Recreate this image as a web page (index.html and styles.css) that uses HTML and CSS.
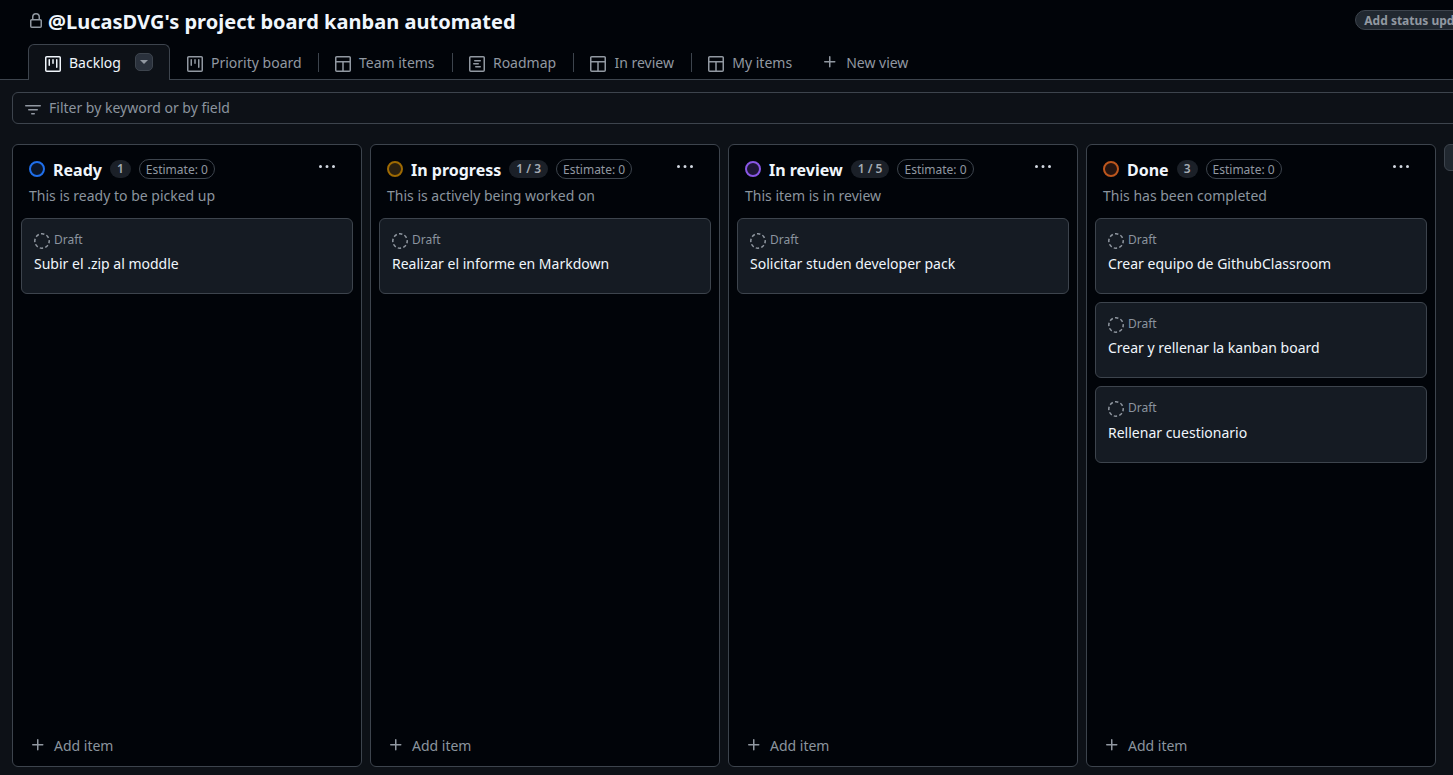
FILE: index.html
```html
<!DOCTYPE html>
<html lang="en">
<head>
<meta charset="utf-8">
<title>Project board</title>
<link rel="stylesheet" href="styles.css">
</head>
<body>
<svg class="sprites" width="0" height="0" aria-hidden="true">
  <symbol id="i-board" viewBox="0 0 16 16"><path fill="currentColor" d="M0 1.75C0 .784.784 0 1.75 0h12.5C15.216 0 16 .784 16 1.75v12.5A1.75 1.75 0 0 1 14.25 16H1.75A1.75 1.75 0 0 1 0 14.25ZM1.5 1.75v12.5c0 .138.112.25.25.25h12.5a.25.25 0 0 0 .25-.25V1.75a.25.25 0 0 0-.25-.25H1.75a.25.25 0 0 0-.25.25ZM11.75 3a.75.75 0 0 1 .75.75v7.5a.75.75 0 0 1-1.5 0v-7.5a.75.75 0 0 1 .75-.75Zm-8.25.75a.75.75 0 0 1 1.5 0v5.5a.75.75 0 0 1-1.5 0ZM8 3a.75.75 0 0 1 .75.75v3.5a.75.75 0 0 1-1.5 0v-3.5A.75.75 0 0 1 8 3Z"/></symbol>
  <symbol id="i-table" viewBox="0 0 16 16"><path fill="currentColor" d="M0 1.75C0 .784.784 0 1.75 0h12.5C15.216 0 16 .784 16 1.75v12.5A1.75 1.75 0 0 1 14.25 16H1.75A1.75 1.75 0 0 1 0 14.25ZM1.5 6.5v7.75c0 .138.112.25.25.25H7.25v-8Zm7.25 8h5.5a.25.25 0 0 0 .25-.25V6.5H8.75Zm5.75-9.5V1.75a.25.25 0 0 0-.25-.25H1.75a.25.25 0 0 0-.25.25V5Z"/></symbol>
  <symbol id="i-roadmap" viewBox="0 0 16 16"><path fill="currentColor" d="M4.75 7a.75.75 0 0 0 0 1.5h4.5a.75.75 0 0 0 0-1.5ZM5 4.75A.75.75 0 0 1 5.75 4h5.5a.75.75 0 0 1 0 1.5h-5.5A.75.75 0 0 1 5 4.75ZM6.75 10a.75.75 0 0 0 0 1.5h4.5a.75.75 0 0 0 0-1.5Z"/><path fill="currentColor" d="M0 1.75C0 .784.784 0 1.75 0h12.5C15.216 0 16 .784 16 1.75v12.5A1.75 1.75 0 0 1 14.25 16H1.75A1.75 1.75 0 0 1 0 14.25Zm1.75-.25a.25.25 0 0 0-.25.25v12.5c0 .138.112.25.25.25h12.5a.25.25 0 0 0 .25-.25V1.75a.25.25 0 0 0-.25-.25Z"/></symbol>
  <symbol id="i-plus" viewBox="0 0 16 16"><path fill="currentColor" d="M7.75 2a.75.75 0 0 1 .75.75V7h4.25a.75.75 0 0 1 0 1.5H8.5v4.25a.75.75 0 0 1-1.5 0V8.5H2.75a.75.75 0 0 1 0-1.5H7V2.75A.75.75 0 0 1 7.75 2Z"/></symbol>
  <symbol id="i-draft" viewBox="0 0 16 16"><circle cx="8" cy="8" r="7.2" fill="none" stroke="currentColor" stroke-width="1.5" stroke-dasharray="3.4 2.25" stroke-dashoffset="1.2"/></symbol>
  <symbol id="i-dots" viewBox="0 0 16 16"><path fill="currentColor" d="M8 9a1.5 1.5 0 1 0 0-3 1.5 1.5 0 0 0 0 3ZM1.5 9a1.5 1.5 0 1 0 0-3 1.5 1.5 0 0 0 0 3Zm13 0a1.5 1.5 0 1 0 0-3 1.5 1.5 0 0 0 0 3Z"/></symbol>
</svg>

<header class="top">
  <div class="title-row">
    <svg class="lock" viewBox="0 0 16 16" width="16" height="16"><path fill="currentColor" d="M4 4a4 4 0 0 1 8 0v2h.25c.966 0 1.75.784 1.75 1.75v5.5A1.75 1.75 0 0 1 12.25 15h-8.5A1.75 1.75 0 0 1 2 13.25v-5.5C2 6.784 2.784 6 3.75 6H4Zm6.5 2V4a2.5 2.5 0 1 0-5 0v2ZM3.5 7.75v5.5c0 .138.112.25.25.25h8.5a.25.25 0 0 0 .25-.25v-5.5a.25.25 0 0 0-.25-.25h-8.5a.25.25 0 0 0-.25.25Z"/></svg>
    <h1 class="title">@LucasDVG's project board kanban automated</h1>
    <span class="status-btn">Add status update</span>
  </div>
  <nav class="tabs">
    <a class="tab tab-active"><svg class="tab-icon"><use href="#i-board"/></svg><span>Backlog</span><span class="caret-btn"><span class="caret"></span></span></a>
    <a class="tab tab-second"><svg class="tab-icon"><use href="#i-board"/></svg><span>Priority board</span></a>
    <span class="sep"></span>
    <a class="tab"><svg class="tab-icon"><use href="#i-table"/></svg><span>Team items</span></a>
    <span class="sep"></span>
    <a class="tab"><svg class="tab-icon"><use href="#i-roadmap"/></svg><span>Roadmap</span></a>
    <span class="sep"></span>
    <a class="tab"><svg class="tab-icon"><use href="#i-table"/></svg><span>In review</span></a>
    <span class="sep"></span>
    <a class="tab"><svg class="tab-icon"><use href="#i-table"/></svg><span>My items</span></a>
    <a class="tab tab-new"><svg class="tab-icon"><use href="#i-plus"/></svg><span>New view</span></a>
  </nav>
</header>

<main class="main">
  <div class="filter">
    <svg class="filter-icon" viewBox="0 0 16 16" width="16" height="16"><path fill="currentColor" d="M.75 3h14.5a.75.75 0 0 1 0 1.5H.75a.75.75 0 0 1 0-1.5ZM3 7.75A.75.75 0 0 1 3.75 7h8.5a.75.75 0 0 1 0 1.5h-8.5A.75.75 0 0 1 3 7.75Zm3 4a.75.75 0 0 1 .75-.75h2.5a.75.75 0 0 1 0 1.5h-2.5a.75.75 0 0 1-.75-.75Z"/></svg>
    <span class="filter-text">Filter by keyword or by field</span>
  </div>

  <div class="board">
    <section class="col">
      <div class="col-head">
        <span class="dot dot-blue"></span><h2 class="col-name">Ready</h2><span class="count">1</span><span class="est">Estimate: 0</span>
        <svg class="dots"><use href="#i-dots"/></svg>
      </div>
      <p class="col-desc">This is ready to be picked up</p>
      <div class="cards">
        <article class="card"><div class="draft"><svg class="draft-icon"><use href="#i-draft"/></svg>Draft</div><div class="card-title">Subir el .zip al moddle</div></article>
      </div>
      <div class="add"><svg class="add-icon"><use href="#i-plus"/></svg>Add item</div>
    </section>

    <section class="col">
      <div class="col-head">
        <span class="dot dot-yellow"></span><h2 class="col-name">In progress</h2><span class="count">1 / 3</span><span class="est">Estimate: 0</span>
        <svg class="dots"><use href="#i-dots"/></svg>
      </div>
      <p class="col-desc">This is actively being worked on</p>
      <div class="cards">
        <article class="card"><div class="draft"><svg class="draft-icon"><use href="#i-draft"/></svg>Draft</div><div class="card-title">Realizar el informe en Markdown</div></article>
      </div>
      <div class="add"><svg class="add-icon"><use href="#i-plus"/></svg>Add item</div>
    </section>

    <section class="col">
      <div class="col-head">
        <span class="dot dot-purple"></span><h2 class="col-name">In review</h2><span class="count">1 / 5</span><span class="est">Estimate: 0</span>
        <svg class="dots"><use href="#i-dots"/></svg>
      </div>
      <p class="col-desc">This item is in review</p>
      <div class="cards">
        <article class="card"><div class="draft"><svg class="draft-icon"><use href="#i-draft"/></svg>Draft</div><div class="card-title">Solicitar studen developer pack</div></article>
      </div>
      <div class="add"><svg class="add-icon"><use href="#i-plus"/></svg>Add item</div>
    </section>

    <section class="col">
      <div class="col-head">
        <span class="dot dot-orange"></span><h2 class="col-name">Done</h2><span class="count">3</span><span class="est">Estimate: 0</span>
        <svg class="dots"><use href="#i-dots"/></svg>
      </div>
      <p class="col-desc">This has been completed</p>
      <div class="cards">
        <article class="card"><div class="draft"><svg class="draft-icon"><use href="#i-draft"/></svg>Draft</div><div class="card-title">Crear equipo de GithubClassroom</div></article>
        <article class="card"><div class="draft"><svg class="draft-icon"><use href="#i-draft"/></svg>Draft</div><div class="card-title">Crear y rellenar la kanban board</div></article>
        <article class="card card-tall"><div class="draft"><svg class="draft-icon"><use href="#i-draft"/></svg>Draft</div><div class="card-title">Rellenar cuestionario</div></article>
      </div>
      <div class="add"><svg class="add-icon"><use href="#i-plus"/></svg>Add item</div>
    </section>

    <div class="add-col"></div>
  </div>
</main>
</body>
</html>
```
FILE: styles.css
```css
* { box-sizing: border-box; }
html, body { height: 100%; }
body {
  margin: 0;
  width: 1453px;
  height: 775px;
  overflow: hidden;
  background: #0d1117;
  color: #f0f6fc;
  font-family: "Noto Sans", sans-serif;
  font-size: 14px;
  display: flex;
  flex-direction: column;
}
.sprites { position: absolute; }

/* header */
.top {
  height: 80px;
  flex: none;
  background: #010409;
  border-bottom: 1px solid #3d444d;
  padding-left: 28px;
}
.title-row {
  height: 44px;
  display: flex;
  align-items: flex-start;
}
.lock { color: #9198a1; margin-top: 13px; width: 16px; height: 16px; }
.title {
  margin: 7px 0 0 4px;
  font-size: 20px;
  line-height: 30px;
  font-weight: 700;
  letter-spacing: 0.024px;
  white-space: nowrap;
}
.status-btn {
  margin-left: auto;
  margin-right: -30px;
  margin-top: 10px;
  height: 20px;
  line-height: 19px;
  padding: 0 8px;
  border: 1px solid #3d444d;
  border-radius: 10px;
  background: #212830;
  color: #9198a1;
  font-size: 12px;
  font-weight: 700;
  white-space: nowrap;
}
.tabs { display: flex; align-items: center; height: 36px; }
.tab {
  display: flex;
  align-items: center;
  height: 36px;
  padding: 0 17px 0 16px;
  color: #9198a1;
  white-space: nowrap;
}
.tab-second { padding-left: 17px; padding-right: 16px; }
.tab-icon { width: 16px; height: 16px; margin-right: 8px; margin-top: 3px; flex: none; }
.tab-active {
  width: 142px;
  color: #f0f6fc;
  background: #0d1117;
  border: 1px solid #3d444d;
  border-bottom: 0;
  border-radius: 6px 6px 0 0;
  padding: 0 0 0 16px;
}
.tab-new { margin-left: -3px; }
.tab-new .tab-icon { margin-top: 0; margin-right: 8px; }
.caret-btn {
  width: 18px;
  height: 18px;
  margin-left: 14px;
  margin-top: -1px;
  border-radius: 5px;
  background: #2a313c;
  border: 1px solid #3d444d;
  display: flex;
  align-items: center;
  justify-content: center;
}
.caret {
  width: 0;
  height: 0;
  border-left: 4px solid transparent;
  border-right: 4px solid transparent;
  border-top: 4px solid #9198a1;
}
.sep { width: 1.33px; height: 19px; background: #3d444d; flex: none; }

/* main */
.main {
  flex: 1;
  min-height: 0;
  padding: 12px 0 8px 12px;
  display: flex;
  flex-direction: column;
}
.filter {
  height: 32px;
  flex: none;
  width: 1460px;
  border: 1px solid #3d444d;
  border-radius: 6px;
  display: flex;
  align-items: center;
  padding-left: 12px;
  color: #8b949e;
  margin-bottom: 20px;
}
.filter-icon { margin-right: 8px; margin-top: 3px; color: #9198a1; }
.filter-text { margin-bottom: 2px; }
.board { flex: 1; min-height: 0; display: flex; gap: 8px; }
.col {
  width: 350px;
  flex: none;
  background: #010409;
  border: 1px solid #3d444d;
  border-radius: 6px;
  display: flex;
  flex-direction: column;
  padding: 0 8px;
}
.col-head {
  display: flex;
  align-items: center;
  height: 24px;
  margin-top: 12px;
  padding-left: 8px;
}
.dot {
  width: 16px;
  height: 16px;
  border-radius: 50%;
  border: 2px solid;
  margin-right: 8px;
  flex: none;
}
.dot-blue { border-color: #1f6feb; background: #0a1528; }
.dot-yellow { border-color: #9e6a03; background: #2a2010; }
.dot-purple { border-color: #8957e5; background: #1e1636; }
.dot-orange { border-color: #bd561d; background: #241410; }
.col-name {
  margin: 2px 8px 0 0;
  font-size: 16px;
  line-height: 24px;
  font-weight: 700;
}
.count {
  height: 18px;
  min-width: 20px;
  padding: 0 7px;
  border-radius: 9px;
  background: #1b2028;
  color: #a4abb3;
  font-size: 12px;
  line-height: 18px;
  font-weight: 600;
  text-align: center;
  margin-right: 8px;
}
.est {
  height: 20px;
  padding: 0 6px;
  border: 1px solid #3d444d;
  border-radius: 10px;
  font-size: 12px;
  line-height: 19px;
  color: #9198a1;
  white-space: nowrap;
}
.dots { width: 16px; height: 16px; margin-left: auto; margin-right: 18px; margin-top: -4px; color: #d1d7e0; }
.col-desc {
  margin: 5px 0 0;
  padding-left: 8px;
  line-height: 20px;
  color: #8b949e;
  font-size: 14px;
}
.cards { display: flex; flex-direction: column; gap: 8px; margin-top: 12px; flex: 1; min-height: 0; }
.card {
  height: 76px;
  background: #151b23;
  border: 1px solid #3d444d;
  border-radius: 6px;
  padding: 10px 12px 0;
}
.card-tall { height: 77px; }
.card-tall .card-title { margin-top: 5px; }
.draft {
  display: flex;
  align-items: center;
  height: 20px;
  font-size: 12px;
  color: #8b949e;
}
.draft-icon { width: 16px; height: 16px; margin-right: 4px; margin-top: 4px; color: #9198a1; }
.card-title { margin-top: 4px; line-height: 21px; color: #f0f6fc; }
.add {
  height: 32px;
  flex: none;
  margin-bottom: 5px;
  padding-left: 9px;
  display: flex;
  align-items: center;
  color: #8b949e;
}
.add-icon { width: 16px; height: 16px; margin-right: 8px; color: #9198a1; }
.add-col {
  width: 40px;
  height: 27px;
  flex: none;
  background: #212830;
  border: 1px solid #3d444d;
  border-radius: 6px;
}
```
